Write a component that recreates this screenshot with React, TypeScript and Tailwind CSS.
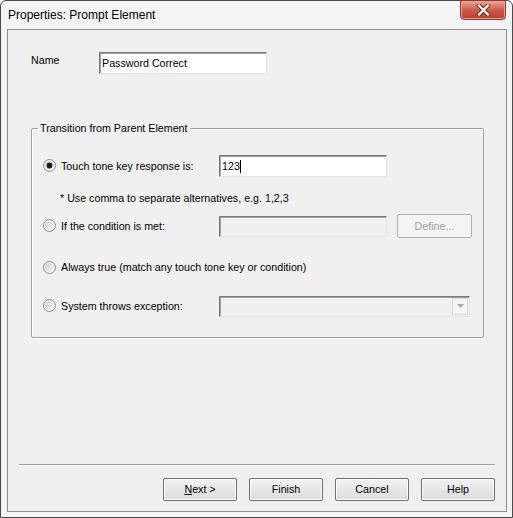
function Radio({ checked, id }: { checked?: boolean; id: string }) {
  return (
    <svg width="13" height="13" viewBox="0 0 13 13" className="shrink-0">
      <defs>
        <linearGradient id={id} x1="0" y1="0" x2="1" y2="1">
          <stop offset="0" stopColor="#cfcfcf" />
          <stop offset="1" stopColor="#fafafa" />
        </linearGradient>
      </defs>
      <circle cx="6.5" cy="6.5" r="6" fill="#f7f7f7" stroke="#8a8b8b" />
      <circle cx="6.5" cy="6.5" r="4.6" fill={`url(#${id})`} />
      {checked && <circle cx="6.5" cy="6.5" r="2.9" fill="#1c1c1c" />}
    </svg>
  )
}

function Button({ children, disabled }: { children: React.ReactNode; disabled?: boolean }) {
  return (
    <div
      className={
        disabled
          ? "w-[75px] h-[24px] flex items-center justify-center border border-[#adb2b5] rounded-[2px] bg-[#f4f4f4] text-[#a0a0a0]"
          : "w-[74px] h-[23px] flex items-center justify-center border border-[#707070] rounded-[2px] bg-gradient-to-b from-[#f3f3f3] to-[#dcdcdc] shadow-[inset_0_0_0_1px_#fcfcfc]"
      }
    >
      {children}
    </div>
  )
}

const sunken =
  "border border-t-[#7a7a7a] border-l-[#7a7a7a] border-b-[#e3e3e3] border-r-[#e3e3e3] shadow-[inset_1px_1px_0_#a0a0a0]"

export default function App() {
  return (
    <div
      className="w-[513px] h-[518px] flex flex-col bg-[#f4f4f4] border border-[#4a4a4a] rounded-t-[6px] text-black"
      style={{ fontFamily: '"Liberation Sans", Arial, sans-serif' }}
    >
      {/* title bar */}
      <div className="h-[28px] shrink-0 flex justify-between items-start pl-[7px] pr-[6px]">
        <span className="text-[12px] leading-[14px] pt-[7px]">Properties: Prompt Element</span>
        <div className="-mt-[1px] w-[46px] h-[20px] flex items-center justify-center rounded-b-[4px] border border-[#8b3a2f] bg-gradient-to-b from-[#e9a899] via-[#cc5a48] to-[#c0392b] shadow-[inset_0_0_0_1px_#eaa191]">
          <svg width="15" height="12" viewBox="0 0 15 12">
            <path
              d="M3 1.5 L12 10.5 M12 1.5 L3 10.5"
              stroke="#6a2c24"
              strokeWidth="4"
              strokeLinecap="square"
            />
            <path
              d="M3 1.5 L12 10.5 M12 1.5 L3 10.5"
              stroke="#ffffff"
              strokeWidth="2.2"
              strokeLinecap="square"
            />
          </svg>
        </div>
      </div>

      {/* client area */}
      <div className="mx-[6px] mr-[5px] mb-[5px] flex-1 flex flex-col border border-[#8e8e8e] bg-[#f0f0f0] text-[10.7px]">
        {/* name */}
        <div className="flex items-start mt-[22px] pl-[23px]">
          <span className="w-[68px] leading-[14px] pt-[1px]">Name</span>
          <div className={`w-[168px] h-[22px] bg-white flex items-center pl-[2px] ${sunken}`}>
            Password Correct
          </div>
        </div>

        {/* group box */}
        <div className="relative ml-[23px] mt-[54px] w-[453px] border border-[#a0a0a0] rounded-[2px] shadow-[1px_1px_0_#ffffff,inset_1px_1px_0_#ffffff] pt-[26px] pb-[20px] pl-[11px] flex flex-col">
          <span className="absolute -top-[8px] left-[6px] px-[2px] bg-[#f0f0f0] leading-[14px]">
            Transition from Parent Element
          </span>

          <div className="h-[22px] flex items-center">
            <div className="w-[176px] flex items-center gap-[5px]">
              <Radio checked id="r1" />
              <span>Touch tone key response is:</span>
            </div>
            <div className={`w-[168px] h-[22px] bg-white flex items-center pl-[2px] ${sunken}`}>
              123
              <span className="inline-block w-[1px] h-[13px] bg-black" />
            </div>
          </div>

          <div className="h-[16px] mt-[13px] flex items-center pl-[17px]">
            * Use comma to separate alternatives, e.g. 1,2,3
          </div>

          <div className="h-[24px] mt-[8px] flex items-center">
            <div className="w-[176px] flex items-center gap-[5px]">
              <Radio id="r2" />
              <span>If the condition is met:</span>
            </div>
            <div className={`w-[168px] h-[21px] bg-[#f0f0f0] ${sunken}`} />
            <div className="ml-[10px]">
              <Button disabled>Define...</Button>
            </div>
          </div>

          <div className="h-[22px] mt-[18px] flex items-center gap-[5px]">
            <Radio id="r3" />
            <span>Always true (match any touch tone key or condition)</span>
          </div>

          <div className="h-[22px] mt-[17px] flex items-center">
            <div className="w-[176px] flex items-center gap-[5px]">
              <Radio id="r4" />
              <span>System throws exception:</span>
            </div>
            <div className={`w-[251px] h-[21px] bg-[#f0f0f0] flex justify-end items-stretch p-[1px] ${sunken}`}>
              <div className="w-[16px] flex items-center justify-center border border-[#d9d9d9] bg-[#f4f4f4]">
                <svg width="7" height="4" viewBox="0 0 7 4">
                  <path d="M0 0 H7 L3.5 4 Z" fill="#a8a8a8" />
                </svg>
              </div>
            </div>
          </div>
        </div>

        {/* footer */}
        <div className="mt-auto mx-[11px] h-[2px] border-t border-[#a0a0a0] border-b border-b-white" />
        <div className="flex justify-end gap-[12px] pr-[11px] mt-[12px] mb-[10px]">
          <Button>
            <span>
              <span className="underline">N</span>ext &gt;
            </span>
          </Button>
          <Button>Finish</Button>
          <Button>Cancel</Button>
          <Button>Help</Button>
        </div>
      </div>
    </div>
  )
}
